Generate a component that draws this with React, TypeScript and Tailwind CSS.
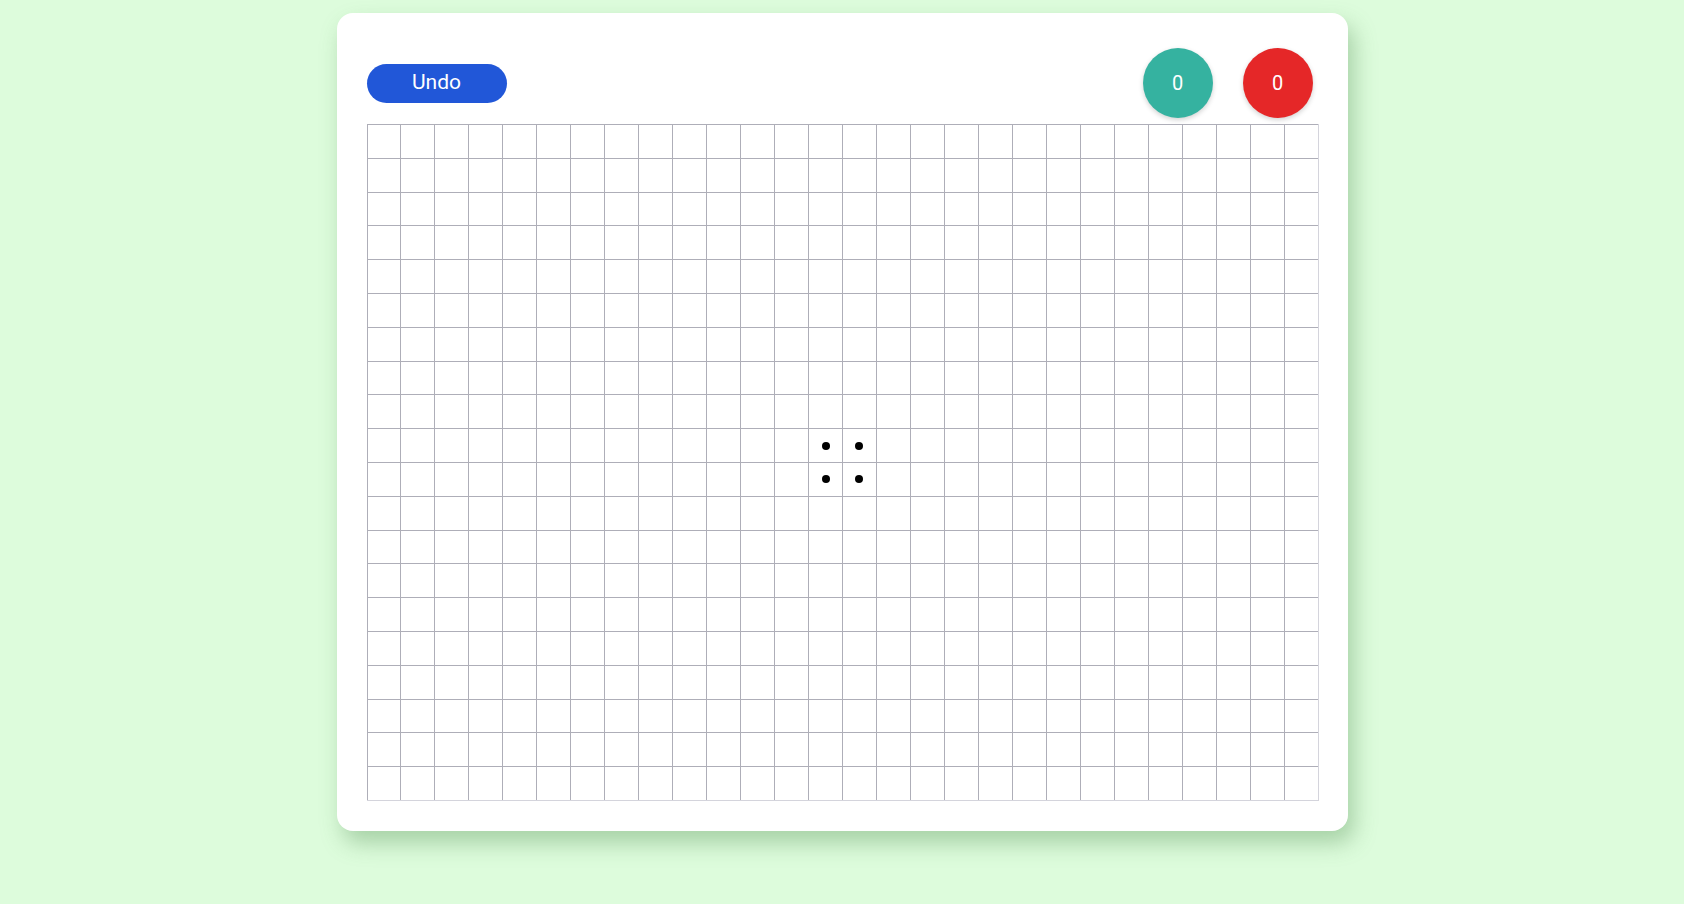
import React from "react";

const COLS = 28;
const ROWS = 20;

// cells that hold a dot (col, row)
const dots = new Set(["13-9", "14-9", "13-10", "14-10"]);

function Score({ value, color }: { value: number; color: string }) {
  return (
    <div
      className={`w-[70px] h-[70px] rounded-full flex items-center justify-center text-white text-[20px] shadow-[0_2px_5px_rgba(0,0,0,0.18)] ${color}`}
    >
      {value}
    </div>
  );
}

export default function App() {
  const cells = [];
  for (let r = 0; r < ROWS; r++) {
    for (let c = 0; c < COLS; c++) {
      const key = `${c}-${r}`;
      cells.push(
        <div
          key={key}
          className="border-l border-t border-[#aeaeb8] flex items-center justify-center"
        >
          {dots.has(key) && <span className="w-[8px] h-[8px] rounded-full bg-black" />}
        </div>
      );
    }
  }

  return (
    <div
      className="min-h-screen w-full bg-[#ddfcdc] flex justify-center pt-[13px]"
      style={{ fontFamily: "Roboto, 'Liberation Sans', sans-serif" }}
    >
      <div className="w-[1011px] h-[818px] bg-white rounded-[16px] shadow-[6px_12px_22px_rgba(80,140,80,0.38)] pl-[30px] pr-[29px] pt-[35px]">
        {/* header */}
        <div className="h-[70px] flex items-center justify-between">
          <button className="w-[140px] h-[39px] rounded-full bg-[#2157d8] text-white text-[21px]">
            Undo
          </button>
          <div className="flex gap-[30px] mr-[6px]">
            <Score value={0} color="bg-[#35b2a0]" />
            <Score value={0} color="bg-[#e52728]" />
          </div>
        </div>

        {/* board */}
        <div className="mt-[6px] w-[952px] h-[677px] grid grid-cols-28 grid-rows-20 border-r border-b border-[#d4d4dc]">
          {cells}
        </div>
      </div>
    </div>
  );
}
